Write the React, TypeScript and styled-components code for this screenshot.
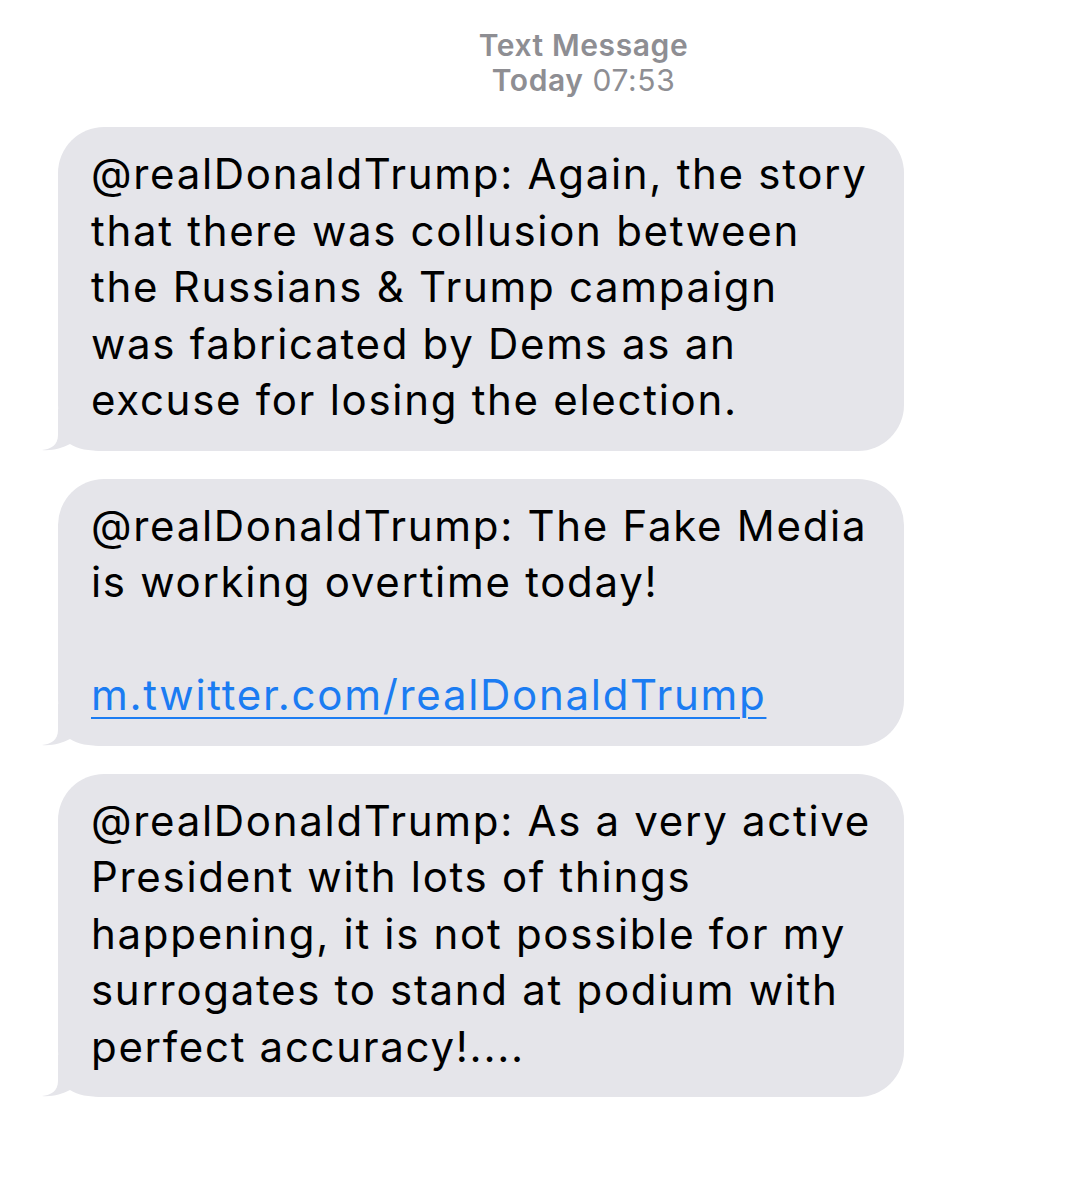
import styled, { createGlobalStyle } from 'styled-components';

const GlobalStyle = createGlobalStyle`
  html, body {
    margin: 0;
    padding: 0;
    background: #ffffff;
  }
  body {
    font-family: Inter, "Liberation Sans", sans-serif;
    -webkit-font-smoothing: antialiased;
  }
`;

const Page = styled.div`
  width: 1081px;
  min-height: 1200px;
  padding-top: 28px;
  box-sizing: border-box;
`;

const Header = styled.div`
  text-align: center;
  color: #8e8e93;
  font-size: 30px;
  line-height: 35px;
  letter-spacing: 0.6px;
  padding-left: 86px;
`;

const HeaderTitle = styled.div`
  font-weight: 600;
`;

const HeaderTime = styled.div`
  font-weight: 400;
  b {
    font-weight: 600;
  }
`;

const Thread = styled.div`
  display: flex;
  flex-direction: column;
  gap: 28px;
  padding: 29px 0 0 58px;
`;

const Bubble = styled.div`
  position: relative;
  isolation: isolate;
  width: 846px;
  box-sizing: border-box;
  background: #e5e5ea;
  border-radius: 46px;
  padding: 19px 20px 22px 33px;
  color: #000;
  font-size: 42px;
  line-height: 56.5px;
  letter-spacing: 1.7px;
  white-space: pre-line;
`;

const Tail = styled.svg`
  position: absolute;
  z-index: -1;
  left: -17px;
  bottom: 0;
  width: 63px;
  height: 42px;
`;

const LinkText = styled.a`
  color: #1b7cf2;
  text-decoration: underline;
  text-decoration-thickness: 2px;
  text-underline-offset: 7px;
`;

function BubbleTail() {
  return (
    <Tail viewBox="0 0 63 42">
      <path
        d="M17,0 L17,26 C17,36 10,40 1,41 C11,42 21,39 29,35 C37,40 47,42 63,42 L63,0 Z"
        fill="#e5e5ea"
      />
    </Tail>
  );
}

function App() {
  return (
    <Page>
      <GlobalStyle />
      <Header>
        <HeaderTitle>Text Message</HeaderTitle>
        <HeaderTime>
          <b>Today</b> 07:53
        </HeaderTime>
      </Header>
      <Thread>
        <Bubble>
          {'@realDonaldTrump: Again, the story\nthat there was collusion between\nthe Russians & Trump campaign\nwas fabricated by Dems as an\nexcuse for losing the election.'}
          <BubbleTail />
        </Bubble>
        <Bubble>
          {'@realDonaldTrump: The Fake Media\nis working overtime today!\n\n'}
          <LinkText href="#">m.twitter.com/realDonaldTrump</LinkText>
          <BubbleTail />
        </Bubble>
        <Bubble>
          {'@realDonaldTrump: As a very active\nPresident with lots of things\nhappening, it is not possible for my\nsurrogates to stand at podium with\nperfect accuracy!....'}
          <BubbleTail />
        </Bubble>
      </Thread>
    </Page>
  );
}

export default App;
